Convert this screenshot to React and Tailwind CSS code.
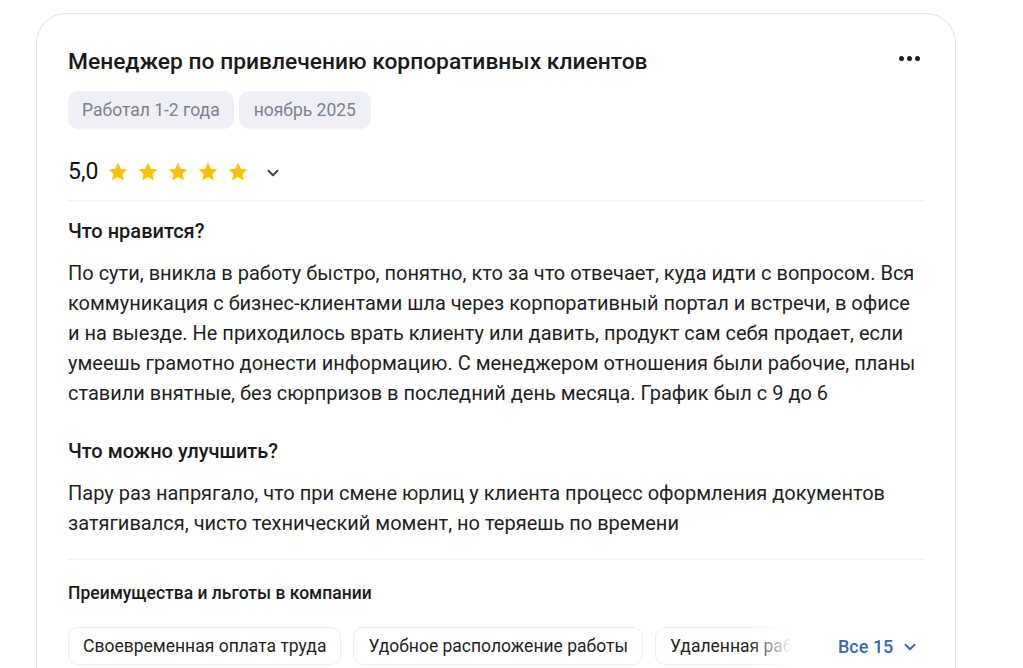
import React from "react";

const Star = () => (
  <svg width="24" height="24" viewBox="0 0 24 24" className="shrink-0">
    <path
      d="M12 2.6l2.83 6.06 6.64.72-4.95 4.49 1.38 6.53L12 17.08 6.1 20.4l1.38-6.53-4.95-4.49 6.64-.72z"
      fill="#ffc107"
    />
  </svg>
);

const Chevron = ({ className = "", color = "#444" }) => (
  <svg width="18" height="18" viewBox="0 0 24 24" className={className}>
    <path d="M6 9l6 6 6-6" fill="none" stroke={color} strokeWidth="2.6" strokeLinecap="round" strokeLinejoin="round" />
  </svg>
);

const perks = [
  "Своевременная оплата труда",
  "Удобное расположение работы",
  "Удаленная работа",
  "ДМС",
];

export default function App() {
  return (
    <div
      className="min-h-screen bg-white overflow-hidden"
      style={{ fontFamily: "Roboto, 'Noto Sans', Arial, sans-serif" }}
    >
      <div className="ml-[36px] mt-[13px] w-[920px] h-[700px] rounded-[30px] border border-[#dfe2ea] bg-white px-[31px] pt-[33px] text-[#1a1a1a]">
        {/* Header */}
        <div className="flex items-start justify-between">
          <h1 className="text-[22.8px] leading-[30px] font-medium text-[#1a1a1a]">
            Менеджер по привлечению корпоративных клиентов
          </h1>
          <button className="mr-[4px] mt-[1px] flex gap-[3px] items-center h-[20px]">
            <span className="w-[5px] h-[5px] rounded-full bg-[#1f1f1f]" />
            <span className="w-[5px] h-[5px] rounded-full bg-[#1f1f1f]" />
            <span className="w-[5px] h-[5px] rounded-full bg-[#1f1f1f]" />
          </button>
        </div>

        <div className="mt-[14px] flex gap-[5px]">
          <span className="h-[38px] px-[14px] flex items-center rounded-[10px] bg-[#eef0f6] text-[17.5px] text-[#7a8190]">
            Работал 1-2 года
          </span>
          <span className="h-[38px] px-[15px] flex items-center rounded-[10px] bg-[#eef0f6] text-[17.5px] text-[#7a8190]">
            ноябрь 2025
          </span>
        </div>

        {/* Rating */}
        <div className="mt-[28px] flex items-center h-[30px]">
          <span className="text-[23px] font-normal text-[#111] mr-[8px]">5,0</span>
          <div className="flex gap-[6px]">
            <Star />
            <Star />
            <Star />
            <Star />
            <Star />
          </div>
          <Chevron className="ml-[14px] mt-[2px]" />
        </div>

        <div className="mt-[13px] h-px bg-[#eef0f5]" />

        {/* Likes */}
        <h2 className="mt-[16px] text-[20px] leading-[28px] font-medium">Что нравится?</h2>
        <p className="mt-[13px] text-[20px] leading-[30px] text-[#1f1f1f]">
          По сути, вникла в работу быстро, понятно, кто за что отвечает, куда идти с вопросом. Вся
          коммуникация с бизнес-клиентами шла через корпоративный портал и встречи, в офисе и на
          выезде. Не приходилось врать клиенту или давить, продукт сам себя продает, если умеешь
          грамотно донести информацию. С менеджером отношения были рабочие, планы ставили внятные,
          без сюрпризов в последний день месяца. График был с 9 до 6
        </p>

        {/* Improvements */}
        <h2 className="mt-[29px] text-[20px] leading-[28px] font-medium">Что можно улучшить?</h2>
        <p className="mt-[13px] text-[20px] leading-[30px] text-[#1f1f1f]">
          Пару раз напрягало, что при смене юрлиц у клиента процесс оформления документов
          затягивался, чисто технический момент, но теряешь по времени
        </p>

        <div className="mt-[21px] h-px bg-[#eef0f5]" />

        {/* Perks */}
        <h3 className="mt-[21px] text-[17.5px] leading-[24px] font-medium">
          Преимущества и льготы в компании
        </h3>
        <div className="mt-[22px] flex items-center">
          <div className="relative w-[724px] overflow-hidden">
            <div className="flex gap-[12px]">
              {perks.map((p) => (
                <span
                  key={p}
                  className="shrink-0 h-[38px] px-[14px] flex items-center rounded-[10px] border border-[#eceef3] bg-white text-[17.5px] text-[#1f1f1f]"
                >
                  {p}
                </span>
              ))}
            </div>
            <div className="absolute right-0 top-0 h-full w-[44px] bg-gradient-to-r from-white/0 to-white" />
          </div>
          <button className="ml-[46px] flex items-center gap-[8px] text-[18px] font-medium text-[#3b68ad]">
            Все 15
            <Chevron color="#3b68ad" className="mt-[1px]" />
          </button>
        </div>
      </div>
    </div>
  );
}
